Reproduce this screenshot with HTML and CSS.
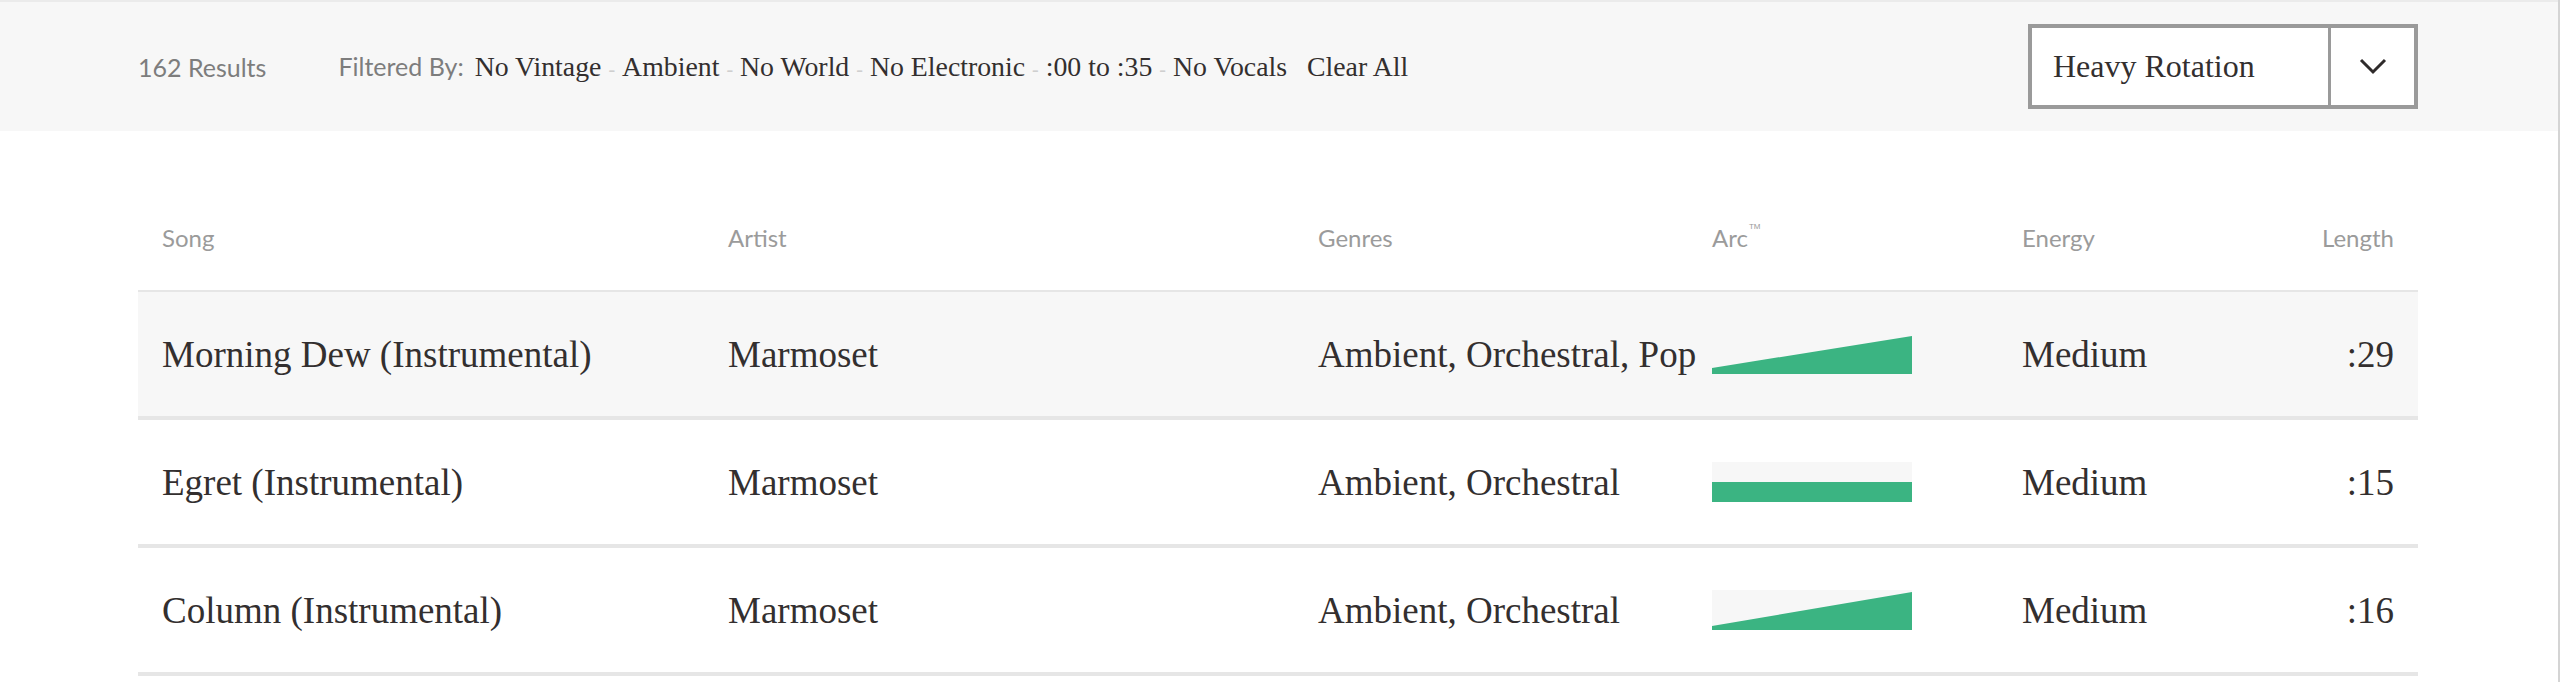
FILE: index.html
```html
<!DOCTYPE html>
<html lang="en">
<head>
<meta charset="utf-8">
<title>Results</title>
<link rel="stylesheet" href="styles.css">
</head>
<body>
<div class="page">
  <header class="filterbar">
    <div class="container bar-inner">
      <span class="count">162 Results</span>
      <div class="filters">
        <span class="filters-label">Filtered By:</span>
        <span class="chip">No Vintage</span><span class="sep">-</span>
        <span class="chip">Ambient</span><span class="sep">-</span>
        <span class="chip">No World</span><span class="sep">-</span>
        <span class="chip">No Electronic</span><span class="sep">-</span>
        <span class="chip">:00 to :35</span><span class="sep">-</span>
        <span class="chip">No Vocals</span>
        <span class="chip clear">Clear All</span>
      </div>
      <div class="select">
        <span class="select-value">Heavy Rotation</span>
        <span class="select-arrow">
          <svg width="28" height="17" viewBox="0 0 28 17"><polyline points="2,2 14,14 26,2" fill="none" stroke="#2f2b2b" stroke-width="3"/></svg>
        </span>
      </div>
    </div>
  </header>

  <main class="container results">
    <div class="row head">
      <div class="cell">Song</div>
      <div class="cell">Artist</div>
      <div class="cell">Genres</div>
      <div class="cell">Arc<sup class="tm">TM</sup></div>
      <div class="cell">Energy</div>
      <div class="cell right">Length</div>
    </div>

    <div class="row track active">
      <div class="cell">Morning Dew (Instrumental)</div>
      <div class="cell">Marmoset</div>
      <div class="cell">Ambient, Orchestral, Pop</div>
      <div class="cell">
        <svg class="arc" width="200" height="40" viewBox="0 0 200 40"><rect width="200" height="40" fill="#f7f7f7"/><polygon points="0,34 200,2 200,40 0,40" fill="#3bb482"/></svg>
      </div>
      <div class="cell">Medium</div>
      <div class="cell right">:29</div>
    </div>

    <div class="row track">
      <div class="cell">Egret (Instrumental)</div>
      <div class="cell">Marmoset</div>
      <div class="cell">Ambient, Orchestral</div>
      <div class="cell">
        <svg class="arc" width="200" height="40" viewBox="0 0 200 40"><rect width="200" height="40" fill="#f7f7f7"/><rect y="20" width="200" height="20" fill="#3bb482"/></svg>
      </div>
      <div class="cell">Medium</div>
      <div class="cell right">:15</div>
    </div>

    <div class="row track">
      <div class="cell">Column (Instrumental)</div>
      <div class="cell">Marmoset</div>
      <div class="cell">Ambient, Orchestral</div>
      <div class="cell">
        <svg class="arc" width="200" height="40" viewBox="0 0 200 40"><rect width="200" height="40" fill="#f7f7f7"/><polygon points="0,36 200,2 200,40 0,40" fill="#3bb482"/></svg>
      </div>
      <div class="cell">Medium</div>
      <div class="cell right">:16</div>
    </div>
  </main>
</div>
</body>
</html>
```

FILE: styles.css
```css
html, body {
  margin: 0;
  padding: 0;
  background: #ffffff;
}

body {
  font-family: "Liberation Serif", "Times New Roman", serif;
  color: #332f2f;
  height: 682px;
  overflow: hidden;
}

.page {
  border-right: 2px solid #d4d4d4;
  min-height: 682px;
  box-sizing: border-box;
}

.container {
  width: 2280px;
  margin-left: 138px;
}

/* ---------- filter bar ---------- */
.filterbar {
  background: #f7f7f7;
  border-top: 2px solid #ebebeb;
  height: 129px;
}

.bar-inner {
  display: flex;
  align-items: center;
  height: 129px;
}

.count {
  font-family: Lato, "Liberation Sans", sans-serif;
  font-size: 25px;
  color: #7d7d7d;
  margin-right: 72px;
}

.filters {
  display: flex;
  align-items: baseline;
  white-space: nowrap;
}

.filters-label {
  font-family: Lato, "Liberation Sans", sans-serif;
  font-size: 25px;
  color: #7d7d7d;
  margin-right: 11px;
}

.chip {
  font-size: 27.8px;
  color: #332f2f;
}

.sep {
  font-size: 20px;
  color: #cfcfcf;
  margin: 0 7px;
}

.clear {
  margin-left: 20px;
}

.select {
  margin-left: auto;
  display: flex;
  height: 77px;
  width: 382px;
  border: 4px solid #9a9a9a;
  background: #ffffff;
}

.select-value {
  flex: 1;
  display: flex;
  align-items: center;
  padding-left: 21px;
  font-size: 32px;
  color: #332f2f;
}

.select-arrow {
  width: 83px;
  border-left: 3px solid #9a9a9a;
  display: flex;
  align-items: center;
  justify-content: center;
}

/* ---------- results table ---------- */
.results {
  padding-top: 53px;
}

.row {
  display: grid;
  grid-template-columns: 566px 590px 394px 310px 1fr 200px;
  align-items: center;
}

.cell {
  padding: 0 24px;
  white-space: nowrap;
}

.right {
  text-align: right;
}

.head {
  height: 106px;
  border-bottom: 2px solid #e6e6e6;
  font-family: Lato, "Liberation Sans", sans-serif;
  font-size: 24px;
  color: #9b9b9b;
}

.tm {
  font-family: "Liberation Sans", Arial, sans-serif;
  font-size: 8px;
  vertical-align: top;
  position: relative;
  top: -1px;
  margin-left: 1px;
}

.track {
  height: 124px;
  border-bottom: 4px solid #e6e6e6;
  font-size: 37px;
  color: #332f2f;
}

.track.active {
  background: #f7f7f7;
}

.arc {
  display: block;
}
```
